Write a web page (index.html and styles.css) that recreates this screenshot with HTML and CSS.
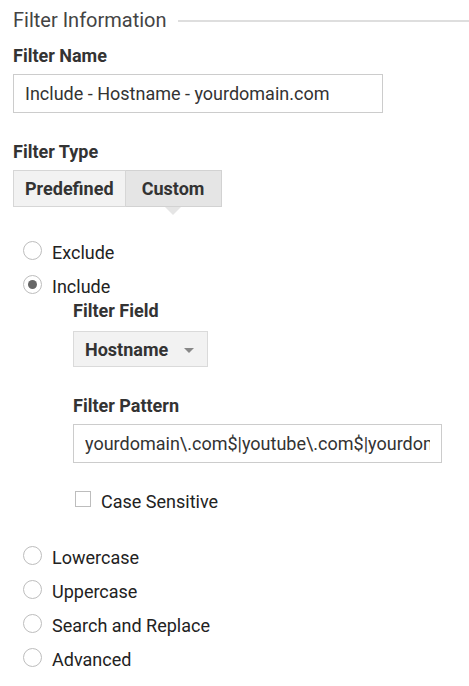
FILE: index.html
```html
<!DOCTYPE html>
<html lang="en">
<head>
    <meta charset="UTF-8">
    <meta name="viewport" content="width=device-width, initial-scale=1.0">
    <title>Filter Information</title>
    <link rel="stylesheet" href="styles.css">
</head>
<body>
    <div class="filter-form">
        <div class="legend">
            <span>Filter Information</span>
            <div class="legend-line"></div>
        </div>

        <label class="field-label" for="filterName">Filter Name</label>
        <input class="text-input name-input" type="text" id="filterName" value="Include - Hostname - yourdomain.com">

        <div class="field-label type-label">Filter Type</div>
        <div class="toggle">
            <button class="toggle-btn">Predefined</button>
            <button class="toggle-btn active">Custom</button>
        </div>

        <ul class="radio-list">
            <li class="radio-row"><span class="radio"></span>Exclude</li>
            <li>
                <div class="radio-row"><span class="radio checked"></span>Include</div>
                <div class="sub-fields">
                    <div class="field-label">Filter Field</div>
                    <div class="dropdown">
                        <span>Hostname</span>
                        <span class="caret"></span>
                    </div>

                    <label class="field-label pattern-label" for="filterPattern">Filter Pattern</label>
                    <input class="text-input pattern-input" type="text" id="filterPattern" value="yourdomain\.com$|youtube\.com$|yourdomain2\.com$">

                    <div class="check-row"><span class="checkbox"></span>Case Sensitive</div>
                </div>
            </li>
            <li class="radio-row"><span class="radio"></span>Lowercase</li>
            <li class="radio-row"><span class="radio"></span>Uppercase</li>
            <li class="radio-row"><span class="radio"></span>Search and Replace</li>
            <li class="radio-row"><span class="radio"></span>Advanced</li>
        </ul>
    </div>
</body>
</html>
```

FILE: styles.css
```css
/* General Styles */
body {
    font-family: Roboto, 'Liberation Sans', sans-serif;
    background-color: #ffffff;
    color: #222;
    margin: 0;
    padding: 0 0 0 13px;
}

/* Legend */
.legend {
    display: flex;
    align-items: center;
    margin-top: 8px;
    height: 24px;
}

.legend span {
    font-size: 20px;
    line-height: 24px;
    color: #444;
    white-space: nowrap;
}

.legend-line {
    flex: 1;
    height: 2px;
    background-color: #dedede;
    margin-left: 11px;
    margin-top: 1px;
}

/* Labels */
.field-label {
    display: block;
    font-size: 18px;
    line-height: 22px;
    font-weight: 700;
    color: #333;
}

.filter-form > .field-label {
    margin-top: 13px;
}

.filter-form > .type-label {
    margin-top: 28px;
}

/* Text Inputs */
.text-input {
    display: block;
    box-sizing: border-box;
    height: 39px;
    padding: 0 11px;
    font-family: Roboto, 'Liberation Sans', sans-serif;
    font-size: 18px;
    color: #333;
    border: 1px solid #cccccc;
    border-radius: 0;
    background-color: #ffffff;
    outline: none;
}

.name-input {
    width: 370px;
    margin-top: 7px;
}

.pattern-input {
    width: 369px;
    margin-top: 7px;
}

/* Predefined / Custom Toggle */
.toggle {
    display: flex;
    margin-top: 7px;
}

.toggle-btn {
    position: relative;
    height: 37px;
    padding: 0 11px;
    font-family: Roboto, 'Liberation Sans', sans-serif;
    font-size: 18px;
    font-weight: 700;
    color: #333;
    background-color: #f2f2f2;
    border: 1px solid #d6d6d6;
    border-radius: 0;
}

.toggle-btn + .toggle-btn {
    border-left: none;
}

.toggle-btn.active {
    width: 96px;
    background-color: #e5e5e5;
    border-color: #d2d2d2;
}

.toggle-btn.active::after {
    content: '';
    position: absolute;
    left: 50%;
    bottom: -9px;
    margin-left: -8px;
    border-left: 8px solid transparent;
    border-right: 8px solid transparent;
    border-top: 8px solid #e5e5e5;
}

/* Radio List */
.radio-list {
    list-style: none;
    margin: 28px 0 0;
    padding: 0 0 0 10px;
}

.radio-row {
    display: flex;
    align-items: center;
    height: 34px;
    font-size: 18px;
    color: #222;
}

.radio {
    box-sizing: border-box;
    width: 19px;
    height: 19px;
    border: 1.5px solid #bdbdbd;
    border-radius: 50%;
    margin-right: 10px;
    margin-top: -3px;
    display: flex;
    align-items: center;
    justify-content: center;
}

.radio.checked::before {
    content: '';
    width: 9px;
    height: 9px;
    border-radius: 50%;
    background-color: #666;
}

/* Nested Fields */
.sub-fields {
    padding-left: 50px;
    margin-top: -3px;
    margin-bottom: 22px;
}

.dropdown {
    display: flex;
    align-items: center;
    justify-content: space-between;
    box-sizing: border-box;
    width: 135px;
    height: 36px;
    margin-top: 9px;
    padding: 0 13px 0 11px;
    font-size: 18px;
    font-weight: 700;
    color: #333;
    background-color: #f2f2f2;
    border: 1px solid #dadada;
}

.caret {
    border-left: 5px solid transparent;
    border-right: 5px solid transparent;
    border-top: 5px solid #888;
    margin-top: 2px;
}

.pattern-label {
    margin-top: 28px;
}

.check-row {
    display: flex;
    align-items: center;
    height: 34px;
    margin-top: 21px;
    font-size: 18px;
    color: #222;
}

.checkbox {
    box-sizing: border-box;
    width: 16px;
    height: 16px;
    border: 1.5px solid #bdbdbd;
    margin: -5px 10px 0 2px;
}
```
